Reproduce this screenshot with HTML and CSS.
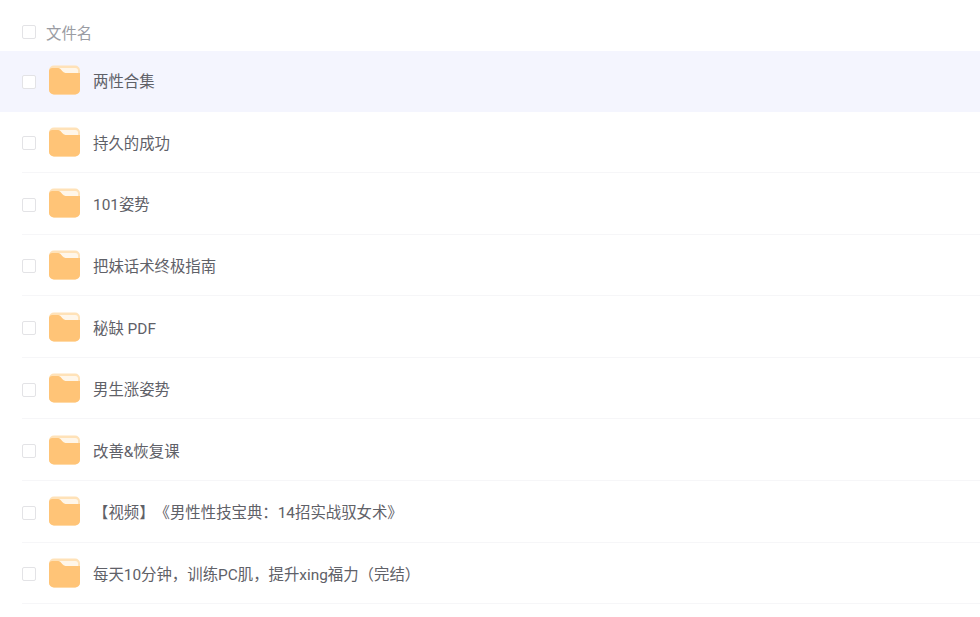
FILE: index.html
```html
<!DOCTYPE html>
<html lang="zh">
<head>
<meta charset="utf-8">
<title>文件列表</title>
<link rel="stylesheet" href="styles.css">
</head>
<body>
<svg class="defs" width="0" height="0" aria-hidden="true">
  <symbol id="folder" viewBox="0 0 32 30">
    <rect x="0" y="0" width="32" height="30" rx="5" fill="#ffe2b8"/>
    <path d="M9 2.500H27a3 3 0 0 1 3 3V8H17Z" fill="#fff6e9"/>
    <path d="M0 5.500A3.500 3.500 0 0 1 3.500 2.500H9.500C11 2.500 11.500 3.200 12.500 4.500L14 6.300C14.800 7.300 15.500 7.700 17 7.700H32V25A5 5 0 0 1 27 30H5A5 5 0 0 1 0 25Z" fill="#ffc477"/>
  </symbol>
</svg>
<main class="list">
  <div class="head">
    <span class="check"></span>
    <span class="head-name">文件名</span>
  </div>
  <div class="row active"><span class="check"></span><svg class="icon"><use href="#folder"/></svg><span class="name">两性合集</span></div>
  <div class="row"><span class="check"></span><svg class="icon"><use href="#folder"/></svg><span class="name">持久的成功</span></div>
  <div class="row"><span class="check"></span><svg class="icon"><use href="#folder"/></svg><span class="name">101姿势</span></div>
  <div class="row"><span class="check"></span><svg class="icon"><use href="#folder"/></svg><span class="name">把妹话术终极指南</span></div>
  <div class="row"><span class="check"></span><svg class="icon"><use href="#folder"/></svg><span class="name">秘缺 PDF</span></div>
  <div class="row"><span class="check"></span><svg class="icon"><use href="#folder"/></svg><span class="name">男生涨姿势</span></div>
  <div class="row"><span class="check"></span><svg class="icon"><use href="#folder"/></svg><span class="name">改善&amp;恢复课</span></div>
  <div class="row"><span class="check"></span><svg class="icon"><use href="#folder"/></svg><span class="name">【视频】《男性性技宝典：14招实战驭女术》</span></div>
  <div class="row"><span class="check"></span><svg class="icon"><use href="#folder"/></svg><span class="name">每天10分钟，训练PC肌，提升xing福力（完结）</span></div>
</main>
</body>
</html>
```
FILE: styles.css
```css
html, body {
  margin: 0;
  padding: 0;
  background: #fff;
}
body {
  font-family: "Roboto", "Noto Sans CJK SC", sans-serif;
  font-size: 15.4px;
  line-height: 22px;
  color: #5f6168;
  overflow: hidden;
  text-spacing-trim: space-all;
}
.defs {
  display: block;
  height: 0;
}
.list {
  padding-top: 14px;
}
.head {
  height: 36.5px;
  display: flex;
  align-items: center;
  padding-left: 22px;
  color: #9a9ca3;
}
.head-name {
  margin-left: 10px;
  padding-top: 4px;
}
.check {
  width: 12px;
  height: 12px;
  border: 1px solid #e3e3e6;
  border-radius: 2px;
  background: #fff;
  flex: none;
}
.row {
  height: 61.6px;
  box-sizing: border-box;
  display: flex;
  align-items: center;
  padding-top: 0.8px;
  padding-left: 22px;
  position: relative;
}
.row::after {
  content: "";
  position: absolute;
  left: 22px;
  right: 0;
  bottom: 0.6px;
  height: 1px;
  background: #f6f6f8;
}
.row.active {
  background: #f4f5fe;
}
.row.active::after {
  display: none;
}
.icon {
  width: 31px;
  height: 30px;
  margin-left: 13px;
  margin-top: -3px;
  flex: none;
}
.name {
  margin-left: 13px;
  padding-top: 1px;
}
```
